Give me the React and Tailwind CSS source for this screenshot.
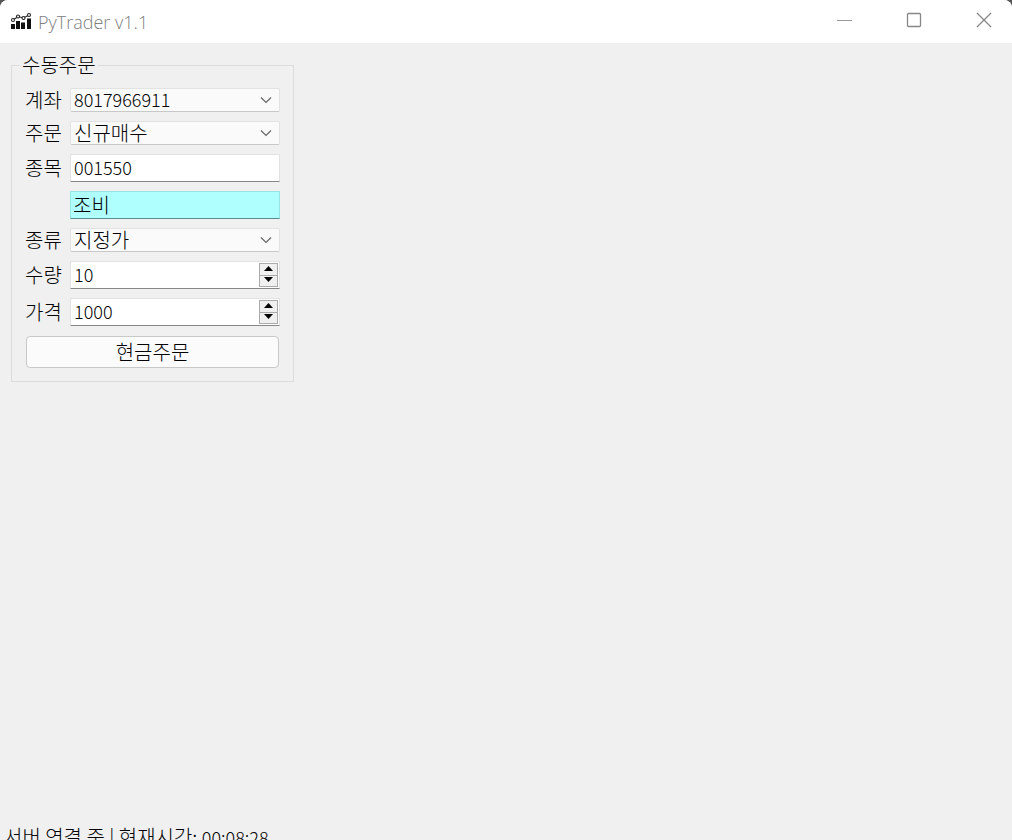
import { useState } from "react";

const FIELD = "w-full border border-[#e2e2e2] pl-[3px] font-light outline-none";

//? chart icon of the window
function AppIcon() {
  return (
    <svg className="h-5 w-[22px]" viewBox="0 0 22 20" aria-hidden="true">
      <g fill="#111">
        <rect x="1" y="12" width="4" height="5" />
        <rect x="6" y="9" width="4" height="8" />
        <rect x="11" y="10.500" width="4" height="6.500" />
        <rect x="17" y="6.500" width="4" height="10.500" />
      </g>
      <g fill="#fff" stroke="#222" strokeWidth="1.100">
        <path d="M3 8 L8 4.500 L13.500 6 L19 3" fill="none" />
        <circle cx="3" cy="8" r="1.500" />
        <circle cx="8" cy="4.500" r="1.500" />
        <circle cx="13.500" cy="6" r="1.500" />
        <circle cx="19" cy="3" r="1.500" />
      </g>
    </svg>
  );
}

function TitleBar() {
  return (
    <header className="flex h-[43px] shrink-0 items-center rounded-t-lg bg-white pl-[10px]">
      <AppIcon />
      <h1 className="ml-[6px] flex-1 pt-px font-['Open_Sans','Noto_Sans_CJK_KR',sans-serif] text-[18px] leading-6 font-light text-[#808080]">
        PyTrader v1.1
      </h1>
      <div className="flex h-full items-center gap-[38px] pr-[12px] pb-[3px]">
        <button type="button" aria-label="최소화" className="p-2">
          <svg className="size-4" viewBox="0 0 16 16" fill="none" stroke="#999">
            <path d="M1 8.500 H16" />
          </svg>
        </button>
        <button type="button" aria-label="최대화" className="p-2">
          <svg className="size-4" viewBox="0 0 16 16" fill="none" stroke="#888">
            <rect x="1.500" y="1.500" width="13" height="13" rx="1" strokeWidth="1.300" />
          </svg>
        </button>
        <button type="button" aria-label="닫기" className="p-2">
          <svg className="size-4" viewBox="0 0 16 16" fill="none" stroke="#888">
            <path d="M1 1 L15 15 M15 1 L1 15" strokeWidth="1.300" />
          </svg>
        </button>
      </div>
    </header>
  );
}

function Row({ id, label, children }) {
  return (
    <div className="flex items-center">
      <label htmlFor={id} className="w-[45px] shrink-0 text-[20px] leading-6">
        {label}
      </label>
      <div className="relative flex-1">{children}</div>
    </div>
  );
}

function Combo({ id, options, className }) {
  return (
    <>
      <select
        id={id}
        className={`block h-6 appearance-none rounded-xs border-b-[#c8c8c8] bg-[#fafafa] ${FIELD} ${className}`}
      >
        {options.map((option) => (
          <option key={option}>{option}</option>
        ))}
      </select>
      <svg
        className="pointer-events-none absolute top-2 right-2 h-2 w-3"
        viewBox="0 0 12 8"
        fill="none"
        stroke="#666"
        strokeWidth="1.200"
      >
        <path d="M1 1.500 L6 6.500 L11 1.500" />
      </svg>
    </>
  );
}

function Spin({ id, value, setValue, step }) {
  return (
    <div className="flex h-7 border border-[#e2e2e2] border-b-[#888] bg-white">
      <input
        id={id}
        type="number"
        value={value}
        onChange={(e) => setValue(Number(e.target.value))}
        className="w-full min-w-0 [appearance:textfield] pb-[2px] pl-[3px] text-[18px] font-light outline-none"
      />
      <div className="flex w-5 shrink-0 flex-col py-px pr-px">
        <button
          type="button"
          aria-label="증가"
          onClick={() => setValue(value + step)}
          className="flex flex-1 items-center justify-center border border-[#aaa] bg-[#f0f0f0] pb-[2px]"
        >
          <svg className="h-[5px] w-[9px] shrink-0" viewBox="0 0 9 5">
            <path d="M4.500 0 L9 5 H0 Z" />
          </svg>
        </button>
        <button
          type="button"
          aria-label="감소"
          onClick={() => setValue(value - step)}
          className="flex flex-1 items-center justify-center border border-t-0 border-[#aaa] bg-[#f0f0f0] pb-[2px]"
        >
          <svg className="h-[5px] w-[9px] shrink-0" viewBox="0 0 9 5">
            <path d="M0 0 H9 L4.500 5 Z" />
          </svg>
        </button>
      </div>
    </div>
  );
}

function OrderForm() {
  const [code, setCode] = useState("001550");
  const [count, setCount] = useState(10);
  const [price, setPrice] = useState(1000);

  return (
    <form onSubmit={(e) => e.preventDefault()}>
      <fieldset className="w-[283px] border border-[#dcdcdc] px-[13px] pb-[13px]">
        <legend className="-ml-[5px] px-[2px] text-[20px] leading-[22px]">수동주문</legend>
        <div className="flex flex-col gap-[9px] pt-3">
          <Row id="account" label="계좌">
            <Combo
              id="account"
              options={["8017966911"]}
              className="pb-[2px] text-[18px] leading-5"
            />
          </Row>
          <Row id="order" label="주문">
            <Combo
              id="order"
              options={["신규매수", "신규매도", "매수취소", "매도취소"]}
              className="text-[20px] leading-[22px]"
            />
          </Row>
          <Row id="code" label="종목">
            <input
              id="code"
              type="text"
              value={code}
              onChange={(e) => setCode(e.target.value)}
              className={`block h-7 border-b-[#888] bg-white pb-[2px] text-[18px] ${FIELD}`}
            />
          </Row>
          <div className="pl-[45px]">
            <input
              type="text"
              aria-label="종목명"
              value="조비"
              readOnly
              className="block h-7 w-full border border-[#98e4e4] border-b-[#5c9090] bg-[#b0ffff] pl-[2px] text-[20px] font-light outline-none"
            />
          </div>
          <Row id="kind" label="종류">
            <Combo
              id="kind"
              options={["지정가", "시장가"]}
              className="text-[20px] leading-[22px]"
            />
          </Row>
          <Row id="count" label="수량">
            <Spin id="count" value={count} setValue={setCount} step={1} />
          </Row>
          <Row id="price" label="가격">
            <Spin id="price" value={price} setValue={setPrice} step={1} />
          </Row>
          <button
            type="submit"
            className="mx-px mt-px h-8 rounded border border-[#c8c8c8] bg-[#fbfbfb] text-[20px] leading-6 font-light"
          >
            현금주문
          </button>
        </div>
      </fieldset>
    </form>
  );
}

function App() {
  return (
    <div className="h-screen bg-[#555]">
      <div className="flex h-full flex-col rounded-t-lg bg-[#f0f0f0] font-['Noto_Sans_CJK_KR',sans-serif] font-light text-black">
        <TitleBar />
        <main className="min-h-0 flex-1 overflow-hidden px-[11px] pt-[11px]">
          <OrderForm />
        </main>
        <footer className="h-[15px] shrink-0 overflow-hidden pl-1 text-[20px] leading-6 whitespace-nowrap">
          서버 연결 중 | 현재시간: <time className="text-[18px]">00:08:28</time>
        </footer>
      </div>
    </div>
  );
}

export default App;
